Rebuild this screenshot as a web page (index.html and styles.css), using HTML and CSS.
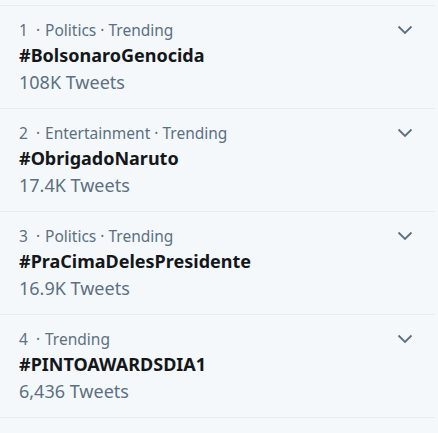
FILE: index.html
```html
<!DOCTYPE html>
<html lang="en">
<head>
  <meta charset="UTF-8" />
  <meta name="viewport" content="width=device-width, initial-scale=1" />
  <title>Trends</title>
  <link rel="stylesheet" href="styles.css">
</head>
<body>
  <div class="trends">
    <div class="trend">
      <div class="trend-text">
        <div class="meta">1<span class="sep">·</span>Politics · Trending</div>
        <div class="tag">#BolsonaroGenocida</div>
        <div class="count">108K Tweets</div>
      </div>
      <svg class="chevron" width="16" height="10" viewBox="0 0 16 10"><path d="M1.5 1.5 L8 8 L14.5 1.5" fill="none" stroke="#5b7083" stroke-width="1.8"/></svg>
    </div>
    <div class="trend">
      <div class="trend-text">
        <div class="meta">2<span class="sep">·</span>Entertainment · Trending</div>
        <div class="tag">#ObrigadoNaruto</div>
        <div class="count">17.4K Tweets</div>
      </div>
      <svg class="chevron" width="16" height="10" viewBox="0 0 16 10"><path d="M1.5 1.5 L8 8 L14.5 1.5" fill="none" stroke="#5b7083" stroke-width="1.8"/></svg>
    </div>
    <div class="trend">
      <div class="trend-text">
        <div class="meta">3<span class="sep">·</span>Politics · Trending</div>
        <div class="tag">#PraCimaDelesPresidente</div>
        <div class="count">16.9K Tweets</div>
      </div>
      <svg class="chevron" width="16" height="10" viewBox="0 0 16 10"><path d="M1.5 1.5 L8 8 L14.5 1.5" fill="none" stroke="#5b7083" stroke-width="1.8"/></svg>
    </div>
    <div class="trend">
      <div class="trend-text">
        <div class="meta">4<span class="sep">·</span>Trending</div>
        <div class="tag">#PINTOAWARDSDIA1</div>
        <div class="count">6,436 Tweets</div>
      </div>
      <svg class="chevron" width="16" height="10" viewBox="0 0 16 10"><path d="M1.5 1.5 L8 8 L14.5 1.5" fill="none" stroke="#5b7083" stroke-width="1.8"/></svg>
    </div>
  </div>
</body>
</html>
```

FILE: styles.css
```css
body {
  margin: 0;
  background-color: #f5f8fa;
  font-family: "Noto Sans", sans-serif;
}

.trends {
  padding-top: 5px;
  width: 435px;
}

.trend {
  display: flex;
  justify-content: space-between;
  align-items: flex-start;
  border-top: 1px solid #e6ecf0;
  padding: 13px 22px 0 19px;
  height: 89px;
}

.trend:last-child {
  border-bottom: 1px solid #e6ecf0;
}

.meta {
  color: #5b7083;
  font-size: 15.5px;
  line-height: 23px;
}

.sep {
  padding: 0 5px 0 8px;
}

.tag {
  color: #14171a;
  font-size: 18px;
  font-weight: bold;
  line-height: 27px;
}

.count {
  color: #5b7083;
  font-size: 18px;
  line-height: 27px;
}

.chevron {
  margin-top: 6px;
}
```
